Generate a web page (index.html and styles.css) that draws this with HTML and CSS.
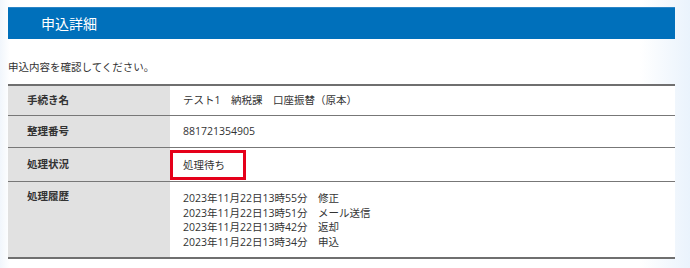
FILE: index.html
```html
<!DOCTYPE html>
<html lang="ja">
<head>
<meta charset="utf-8">
<link rel="stylesheet" href="styles.css">
</head>
<body>
<div class="page">
  <h1 class="title">申込詳細</h1>
  <p class="lead">申込内容を確認してください。</p>
  <table class="detail">
    <tr>
      <th>手続き名</th>
      <td>テスト1　納税課　口座振替（原本）</td>
    </tr>
    <tr>
      <th>整理番号</th>
      <td>881721354905</td>
    </tr>
    <tr>
      <th>処理状況</th>
      <td class="status-cell"><span class="status">処理待ち</span></td>
    </tr>
    <tr class="history-row">
      <th>処理履歴</th>
      <td>
        <div>2023年11月22日13時55分　修正</div>
        <div>2023年11月22日13時51分　メール送信</div>
        <div>2023年11月22日13時42分　返却</div>
        <div>2023年11月22日13時34分　申込</div>
      </td>
    </tr>
  </table>
</div>
</body>
</html>
```

FILE: styles.css
```css
html, body {
  margin: 0;
  padding: 0;
}
body {
  background: linear-gradient(to right, #f1f6fc 0, #ffffff 10px, #ffffff 640px, #eaf3fc 690px);
  font-family: "Open Sans", "Noto Sans CJK JP", sans-serif;
  font-size: 10.5px;
  color: #333;
  height: 268px;
}
.page {
  width: 667px;
  margin-left: 8px;
  padding-top: 7px;
}
.title {
  margin: 0;
  height: 32px;
  box-sizing: border-box;
  background: #0070bb;
  border-top: 1px solid #2a85c6;
  color: #fff;
  font-family: "Noto Sans CJK JP", sans-serif;
  font-size: 14px;
  font-weight: normal;
  line-height: 30px;
  padding-left: 33px;
}
.lead {
  margin: 20px 0 0;
  line-height: 16px;
  height: 25px;
}
.detail {
  width: 100%;
  border-collapse: collapse;
  border-top: 2px solid #6f6f6f;
  border-bottom: 2px solid #6f6f6f;
}
.detail th,
.detail td {
  border-bottom: 1px solid #777;
  text-align: left;
  vertical-align: middle;
  line-height: 14.5px;
}
.detail th {
  width: 143px;
  background: #e1e1e1;
  font-family: "Noto Sans CJK JP", sans-serif;
  font-weight: bold;
  padding: 0 0 0 19px;
  height: 29px;
  color: #333;
}
.detail td {
  background: #fff;
  padding: 0 0 0 13px;
}
.detail tr:nth-child(2) th,
.detail tr:nth-child(2) td {
  height: 31px;
}
.detail .status-cell {
  padding: 1px 0 0;
  height: 32px;
}
.status {
  display: inline-block;
  border: 3px solid #e5001a;
  padding: 5px 18px 5px 10px;
  line-height: 14.5px;
}
.history-row th,
.history-row td {
  vertical-align: top;
  padding-top: 9px;
  height: 66px;
}
.history-row th {
  padding-top: 7px;
}
```
